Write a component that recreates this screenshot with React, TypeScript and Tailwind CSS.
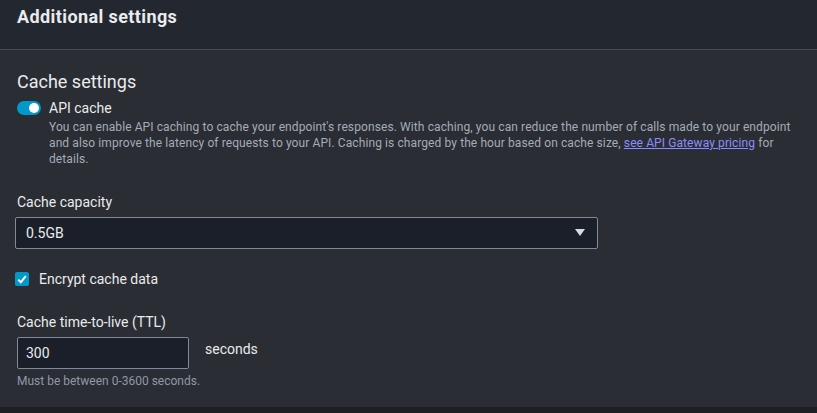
import React from "react";

export default function App() {
  return (
    <div
      className="w-[817px] h-[413px] overflow-hidden bg-[#1e1f22] text-[#d1d5db]"
      style={{ fontFamily: "Roboto, 'Noto Sans', Arial, sans-serif" }}
    >
      <div className="h-[49px] bg-[#232730] px-[17px] pt-[5px]">
        <h2 className="text-[18px] leading-[24px] font-bold tracking-[0.4px] text-[#e9ebed]">Additional settings</h2>
      </div>
      <div className="h-px bg-[#434a55]" />
      <div className="h-[357px] bg-[#2a2d33] px-[17px] pt-[20px]">
        <h3 className="text-[18px] leading-[24px] text-[#e9ebed]">Cache settings</h3>
        <div className="mt-[4px] flex items-center gap-[8px]">
          <div className="relative h-[14px] w-[24px] rounded-full bg-[#0099c9]">
            <div className="absolute right-[2px] top-[2px] h-[10px] w-[10px] rounded-full bg-white" />
          </div>
          <span className="text-[14px] leading-[20px] text-[#e9ebed]">API cache</span>
        </div>
        <p className="mt-[1px] ml-[32px] text-[12px] leading-[16px] tracking-[0.1px] text-[#a4acb6] whitespace-nowrap">
          You can enable API caching to cache your endpoint's responses. With caching, you can reduce the number of calls made to your endpoint
          <br />
          and also improve the latency of requests to your API. Caching is charged by the hour based on cache size,{" "}
          <a className="underline text-[#8c8cff]" href="#">see API Gateway pricing</a> for
          <br />
          details.
        </p>
        <div className="mt-[25px] text-[14px] leading-[20px] text-[#e9ebed]">Cache capacity</div>
        <div className="mt-[5px] -ml-[2px] flex h-[32px] w-[583px] items-center justify-between rounded-[2px] border border-[#7f8a98] bg-[#1a1f29] pl-[10px] pr-[12px]">
          <span className="text-[14px] text-[#e9ebed]">0.5GB</span>
          <svg width="10" height="8" viewBox="0 0 10 8">
            <path d="M0 0H10L5 7Z" fill="#d5dbe0" />
          </svg>
        </div>
        <div className="mt-[20px] -ml-[2px] flex items-center gap-[10px]">
          <div className="flex h-[14px] w-[14px] items-center justify-center rounded-[2px] bg-[#0099c9]">
            <svg width="10" height="9" viewBox="0 0 10 9">
              <path d="M1.2 4.6L3.8 7.2L8.8 1.2" stroke="white" strokeWidth="2" fill="none" />
            </svg>
          </div>
          <span className="text-[14px] leading-[20px] text-[#e9ebed]">Encrypt cache data</span>
        </div>
        <div className="mt-[23px] text-[14px] leading-[20px] text-[#e9ebed]">Cache time-to-live (TTL)</div>
        <div className="mt-[5px] flex items-start gap-[16px]">
          <div className="flex h-[32px] w-[172px] items-center rounded-[2px] border border-[#7f8a98] bg-[#1a1f29] pl-[8px]">
            <span className="text-[14px] text-[#e9ebed]">300</span>
          </div>
          <span className="mt-[2px] text-[14px] leading-[20px] text-[#e9ebed]">seconds</span>
        </div>
        <div className="mt-[4px] text-[12px] leading-[16px] text-[#8d99a8]">Must be between 0-3600 seconds.</div>
      </div>
    </div>
  );
}
